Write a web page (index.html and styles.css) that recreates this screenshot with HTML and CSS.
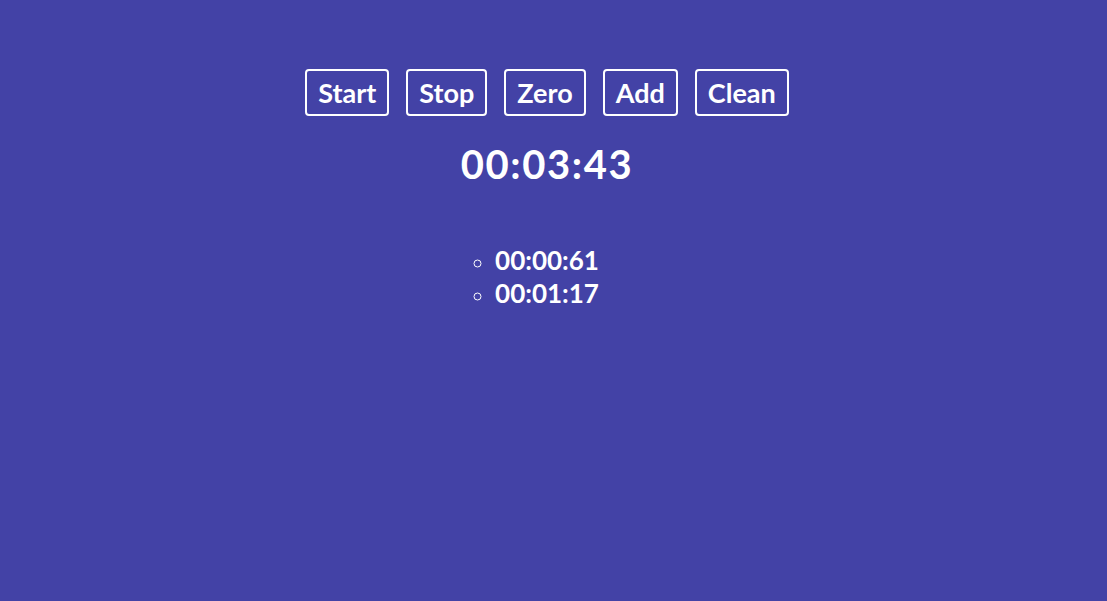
FILE: index.html
```html
<!DOCTYPE html>
<html>
<head>
<meta charset="utf-8">
<link rel="stylesheet" href="styles.css">
</head>
<body>
<main class="app">
  <div class="controls">
    <button class="btn">Start</button>
    <button class="btn">Stop</button>
    <button class="btn">Zero</button>
    <button class="btn">Add</button>
    <button class="btn">Clean</button>
  </div>
  <h1 class="timer">00:03:43</h1>
  <ul class="laps">
    <li>00:00:61</li>
    <li>00:01:17</li>
  </ul>
</main>
</body>
</html>
```
FILE: styles.css
```css
html, body {
  margin: 0;
  padding: 0;
  background: #4342a6;
  height: 100%;
}
body {
  font-family: Lato, "Open Sans", sans-serif;
  color: #fff;
}
.app {
  display: flex;
  flex-direction: column;
  align-items: center;
  padding: 69px 13px 0 0;
}
.controls {
  display: flex;
  gap: 17px;
}
.btn {
  font-family: inherit;
  font-weight: 700;
  font-size: 27px;
  color: #fff;
  background: transparent;
  border: 2px solid #fff;
  border-radius: 4px;
  padding: 0 11px;
  height: 47px;
  line-height: 43px;
}
.timer {
  margin: 22px 0 0;
  font-size: 40px;
  font-weight: 700;
  letter-spacing: 1.6px;
  line-height: 52px;
}
.laps {
  margin: 54px 0 0;
  padding: 0;
  list-style: circle;
  font-size: 26px;
  font-weight: 700;
  line-height: 33px;
}
.laps li::marker {
  font-size: 22px;
}
```
